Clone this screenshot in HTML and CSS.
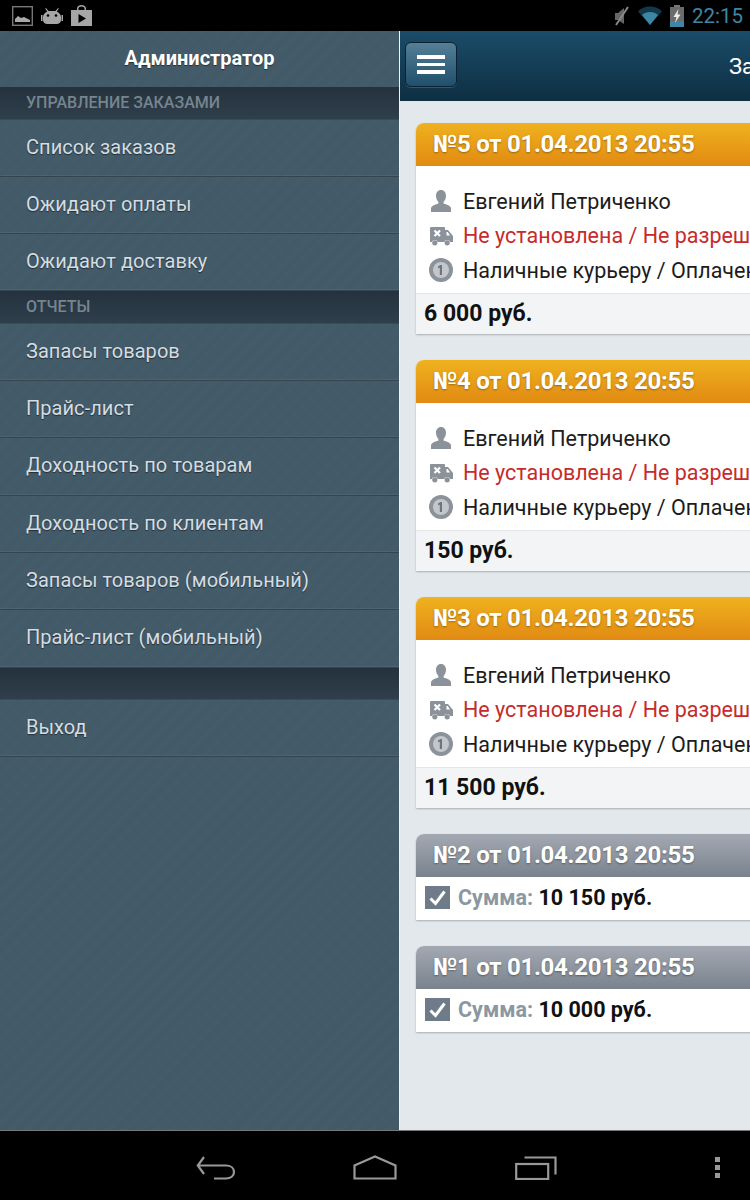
FILE: index.html
```html
<!DOCTYPE html>
<html lang="ru">
<head>
    <meta charset="UTF-8">
    <meta name="viewport" content="width=device-width, initial-scale=1.0">
    <title>Заказы</title>
    <link rel="stylesheet" href="styles.css">
</head>
<body>
<svg class="defs" width="0" height="0">
    <symbol id="i-user" viewBox="0 0 22 24">
        <path d="M11 1c3.200 0 5 2.500 5 5.800 0 2.600-1 4.700-2.400 6v1.600c2.800 1 7.400 2.300 7.400 4.800V23H1v-3.800c0-2.500 4.600-3.800 7.400-4.800v-1.600C7 11.500 6 9.400 6 6.800 6 3.500 7.800 1 11 1z" fill="#8b929a"/>
    </symbol>
    <symbol id="i-truck" viewBox="0 0 24 20">
        <path d="M2 1h13a1 1 0 0 1 1 1v2h3l5 6v6h-2.800a3.200 3.200 0 0 0-6 0H8.800a3.200 3.200 0 0 0-6 0H1V2a1 1 0 0 1 1-1z" fill="#8b929a"/>
        <circle cx="5.800" cy="16.800" r="2.600" fill="#8b929a"/>
        <circle cx="18.200" cy="16.800" r="2.600" fill="#8b929a"/>
        <path d="M5.500 4.500l5.500 5.500M11 4.500l-5.500 5.500" stroke="#fff" stroke-width="2.200"/>
        <path d="M17.500 6h1.200l2.300 3.500h-3.500z" fill="#fff"/>
    </symbol>
    <symbol id="i-coin" viewBox="0 0 24 24">
        <circle cx="12" cy="12" r="12" fill="#8b929a"/>
        <circle cx="12" cy="12" r="8" fill="#c3c7cb"/>
        <path d="M13 7v10h-2.200V9.600L9 10.400V8.600L11.400 7z" fill="#6d747b"/>
    </symbol>
    <symbol id="i-check" viewBox="0 0 25 23">
        <rect width="25" height="23" fill="#6e7c8a"/>
        <path d="M5.500 12.500l5 5 9-12" fill="none" stroke="#fff" stroke-width="3"/>
    </symbol>
</svg>

<div class="status-bar">
    <div class="status-left">
        <svg width="21" height="20" viewBox="0 0 21 20"><rect x="0.700" y="0.700" width="19.600" height="18.600" fill="none" stroke="#777" stroke-width="1.400"/><path d="M3 16v-3l3-3 3 2 3-1 2 1 4 2v2z" fill="#aaa"/></svg>
        <svg width="22" height="18" viewBox="0 0 22 18"><path d="M5 1l2.500 3h7L17 1l.8.600L15.800 4.500C18.500 6 20 8 20 10v3c0 2.500-2 4-4.500 4h-9C4 17 2 15.500 2 13v-3c0-2 1.500-4 4.200-5.500L4.200 1.600z" fill="#a6a6a6"/><rect y="8" width="1.500" height="6" fill="#a6a6a6"/><rect x="20.500" y="8" width="1.500" height="6" fill="#a6a6a6"/><circle cx="7" cy="8.500" r="1.300"/><circle cx="15" cy="8.500" r="1.300"/></svg>
        <svg width="21" height="21" viewBox="0 0 21 21"><path d="M0 5h6V3.500C6 1.500 8 0 10.500 0S15 1.500 15 3.500V5h6v16H0z" fill="#a6a6a6"/><path d="M7.500 5V3.500c0-1.200 1.300-2 3-2s3 .8 3 2V5z"/><path d="M7.500 9l7.500 4.500L7.500 18z"/></svg>
    </div>
    <div class="status-right">
        <svg class="st-mute" width="17" height="20" viewBox="0 0 17 20"><path d="M2 7h3l6-5v16l-6-4H2z" fill="#666"/><path d="M15 1L3 19" stroke="#888" stroke-width="2"/></svg>
        <svg class="st-wifi" width="24" height="19" viewBox="0 0 24 19"><path d="M0 5.500C3 2 7 .5 12 .5S21 2 24 5.500L12 19z" fill="#13384a"/><path d="M4 9c2-2 5-3 8-3s6 1 8 3l-8 10z" fill="#3d86a5"/></svg>
        <svg class="st-batt" width="14" height="22" viewBox="0 0 14 22"><rect x="4" width="6" height="2" fill="#777"/><rect y="2" width="14" height="20" fill="#6b6b6b"/><rect y="16" width="14" height="6" fill="#3d86a5"/><path d="M8.500 4L3.500 12h3L5 18l5.500-8.500H7.500z" fill="#eee"/></svg>
        <span class="clock">22:15</span>
    </div>
</div>

<div class="app">
    <aside class="sidebar">
        <div class="side-title">Администратор</div>
        <div class="side-section">УПРАВЛЕНИЕ ЗАКАЗАМИ</div>
        <a class="side-item">Список заказов</a>
        <a class="side-item">Ожидают оплаты</a>
        <a class="side-item">Ожидают доставку</a>
        <div class="side-section">ОТЧЕТЫ</div>
        <a class="side-item">Запасы товаров</a>
        <a class="side-item">Прайс-лист</a>
        <a class="side-item">Доходность по товарам</a>
        <a class="side-item">Доходность по клиентам</a>
        <a class="side-item">Запасы товаров (мобильный)</a>
        <a class="side-item">Прайс-лист (мобильный)</a>
        <div class="side-section"></div>
        <a class="side-item">Выход</a>
    </aside>

    <main class="main">
        <div class="toolbar">
            <button class="menu-btn"><span></span><span></span><span></span></button>
            <h1 class="page-title">Заказы</h1>
        </div>
        <div class="orders">
            <div class="order">
                <div class="order-head">№5 от 01.04.2013 20:55</div>
                <div class="order-body">
                    <div class="line"><svg class="ico"><use href="#i-user"/></svg>Евгений Петриченко</div>
                    <div class="line red"><svg class="ico"><use href="#i-truck"/></svg>Не установлена / Не разрешена</div>
                    <div class="line"><svg class="ico"><use href="#i-coin"/></svg>Наличные курьеру / Оплачено</div>
                </div>
                <div class="order-total">6 000 руб.</div>
            </div>
            <div class="order">
                <div class="order-head">№4 от 01.04.2013 20:55</div>
                <div class="order-body">
                    <div class="line"><svg class="ico"><use href="#i-user"/></svg>Евгений Петриченко</div>
                    <div class="line red"><svg class="ico"><use href="#i-truck"/></svg>Не установлена / Не разрешена</div>
                    <div class="line"><svg class="ico"><use href="#i-coin"/></svg>Наличные курьеру / Оплачено</div>
                </div>
                <div class="order-total">150 руб.</div>
            </div>
            <div class="order">
                <div class="order-head">№3 от 01.04.2013 20:55</div>
                <div class="order-body">
                    <div class="line"><svg class="ico"><use href="#i-user"/></svg>Евгений Петриченко</div>
                    <div class="line red"><svg class="ico"><use href="#i-truck"/></svg>Не установлена / Не разрешена</div>
                    <div class="line"><svg class="ico"><use href="#i-coin"/></svg>Наличные курьеру / Оплачено</div>
                </div>
                <div class="order-total">11 500 руб.</div>
            </div>
            <div class="order done">
                <div class="order-head">№2 от 01.04.2013 20:55</div>
                <div class="order-sum"><svg class="check"><use href="#i-check"/></svg><span class="sum-label">Сумма:</span> 10 150 руб.</div>
            </div>
            <div class="order done">
                <div class="order-head">№1 от 01.04.2013 20:55</div>
                <div class="order-sum"><svg class="check"><use href="#i-check"/></svg><span class="sum-label">Сумма:</span> 10 000 руб.</div>
            </div>
        </div>
    </main>
</div>

<div class="nav-bar">
    <svg class="nav-back" width="40" height="24" viewBox="0 0 40 24" fill="none" stroke="#999" stroke-width="2.200"><path d="M8 1L1.800 9.500 8 18"/><path d="M2 9.500h28c4.500 0 8 2.500 8 6.500s-3.500 6.500-8 6.500H18"/></svg>
    <svg class="nav-home" width="44" height="25" viewBox="0 0 44 25" fill="none" stroke="#999" stroke-width="2.200"><path d="M1.500 23.500V10.500L22 1.500 42.500 10.500v13z"/></svg>
    <svg class="nav-recent" width="42" height="24" viewBox="0 0 42 24" fill="none" stroke="#999" stroke-width="2.200"><rect x="1.200" y="8" width="32" height="15"/><path d="M9.500 1.500h31v17"/></svg>
    <div class="nav-dots"><span></span><span></span><span></span></div>
</div>
</body>
</html>
```

FILE: styles.css
```css
html, body {
    margin: 0;
    height: 100%;
}
body {
    width: 750px;
    height: 1200px;
    overflow: hidden;
    display: flex;
    flex-direction: column;
    background: #000;
    font-family: Roboto, "Liberation Sans", sans-serif;
}
.defs {
    display: block;
    height: 0;
    flex: none;
}

/* status bar */
.status-bar {
    height: 31px;
    flex: none;
    display: flex;
    justify-content: space-between;
    align-items: center;
    padding: 0 7px 0 12px;
    background: #000;
}
.status-left, .status-right {
    display: flex;
    align-items: center;
    gap: 8px;
}
.clock {
    color: #3f86a6;
    font-size: 20.500px;
}

.app {
    flex: 1;
    display: flex;
    min-height: 0;
}

/* left menu */
.sidebar {
    width: 399px;
    flex: none;
    background-color: #425a69;
    background-image: repeating-linear-gradient(135deg, rgba(255,255,255,0.015) 0 1px, rgba(0,0,0,0.015) 1px 2px);
}
.side-title {
    height: 56px;
    line-height: 54px;
    text-align: center;
    color: #fff;
    font-size: 20px;
    font-weight: 700;
    text-shadow: 0 1px 1px rgba(0,0,0,0.5);
}
.side-section {
    height: 32.500px;
    box-sizing: border-box;
    padding-left: 26px;
    line-height: 31px;
    font-size: 16px;
    font-weight: 500;
    color: #76858f;
    background: linear-gradient(#24323d, #2f3f4b);
    border-bottom: 1px solid #3a4b58;
}
.side-item {
    display: block;
    height: 57.300px;
    box-sizing: border-box;
    padding-left: 26px;
    line-height: 54px;
    font-size: 20px;
    letter-spacing: 0.050px;
    color: #d5dde2;
    border-bottom: 1px solid #33454f;
    box-shadow: inset 0 -1px 0 #4d6373;
    text-shadow: 0 1px 1px rgba(0,0,0,0.5);
}

/* right side */
.main {
    flex: 1;
    min-width: 0;
    overflow: hidden;
    background: #e2e8ec;
    border-left: 1px solid #f0f3f5;
}
.toolbar {
    height: 70px;
    display: flex;
    align-items: center;
    padding-left: 5px;
    background: linear-gradient(#1b4c68, #0e2f43);
}
.menu-btn {
    width: 52px;
    height: 45px;
    flex: none;
    padding: 0;
    margin-top: -3px;
    display: flex;
    flex-direction: column;
    align-items: center;
    justify-content: center;
    gap: 4px;
    background: linear-gradient(#557f97, #1f4f6b);
    border: 1px solid #0c2230;
    border-radius: 6px;
    box-shadow: 0 1px 0 #2c5a75;
}
.menu-btn span {
    display: block;
    width: 28px;
    height: 3.500px;
    background: #fff;
}
.page-title {
    margin: 0 0 0 272px;
    font-size: 22px;
    font-weight: 400;
    color: #fff;
    white-space: nowrap;
}
.orders {
    width: 520px;
    padding: 22px 0 0 16px;
    display: flex;
    flex-direction: column;
    gap: 26px;
}
.order {
    background: #fff;
    border-radius: 8px 8px 0 0;
    box-shadow: 0 1px 2px rgba(0,0,0,0.25);
}
.order-head {
    height: 43px;
    box-sizing: border-box;
    padding-left: 17px;
    line-height: 43px;
    font-size: 24px;
    font-weight: 700;
    letter-spacing: -0.270px;
    color: #fff;
    border-radius: 8px 8px 0 0;
    background: linear-gradient(#efb21f, #e18a12);
    text-shadow: 0 1px 2px rgba(0,0,0,0.35);
    white-space: nowrap;
}
.done .order-head {
    background: linear-gradient(#a2a9b3, #7a828d);
}
.order-body {
    padding: 18px 0 5.500px 13px;
}
.line {
    height: 34.500px;
    display: flex;
    align-items: center;
    gap: 10px;
    font-size: 21.500px;
    color: #1c1c1c;
    white-space: nowrap;
}
.line.red {
    color: #c62b2b;
}
.ico {
    width: 24px;
    height: 24px;
    flex: none;
}
.order-total {
    height: 41px;
    box-sizing: border-box;
    padding-left: 8px;
    line-height: 40px;
    font-size: 23px;
    font-weight: 700;
    color: #111;
    background: #f2f4f5;
    border-top: 1px solid #e3e5e7;
}
.order-sum {
    height: 43px;
    box-sizing: border-box;
    display: flex;
    align-items: center;
    padding: 0 0 2px 9px;
    font-size: 21.500px;
    font-weight: 700;
    color: #111;
    white-space: pre;
}
.check {
    width: 25px;
    height: 23px;
    margin-right: 8px;
    flex: none;
}
.sum-label {
    color: #8b97a3;
}

/* android buttons */
.nav-bar {
    height: 70px;
    flex: none;
    box-sizing: border-box;
    display: flex;
    align-items: center;
    padding: 4px 0 0 196px;
    background: #000;
    border-top: 1px solid #777;
}
.nav-home {
    margin-left: 117px;
}
.nav-recent {
    margin-left: 118px;
}
.nav-dots {
    margin-left: 158px;
    display: flex;
    flex-direction: column;
    gap: 3px;
}
.nav-dots span {
    display: block;
    width: 5px;
    height: 5px;
    background: #999;
}
```
